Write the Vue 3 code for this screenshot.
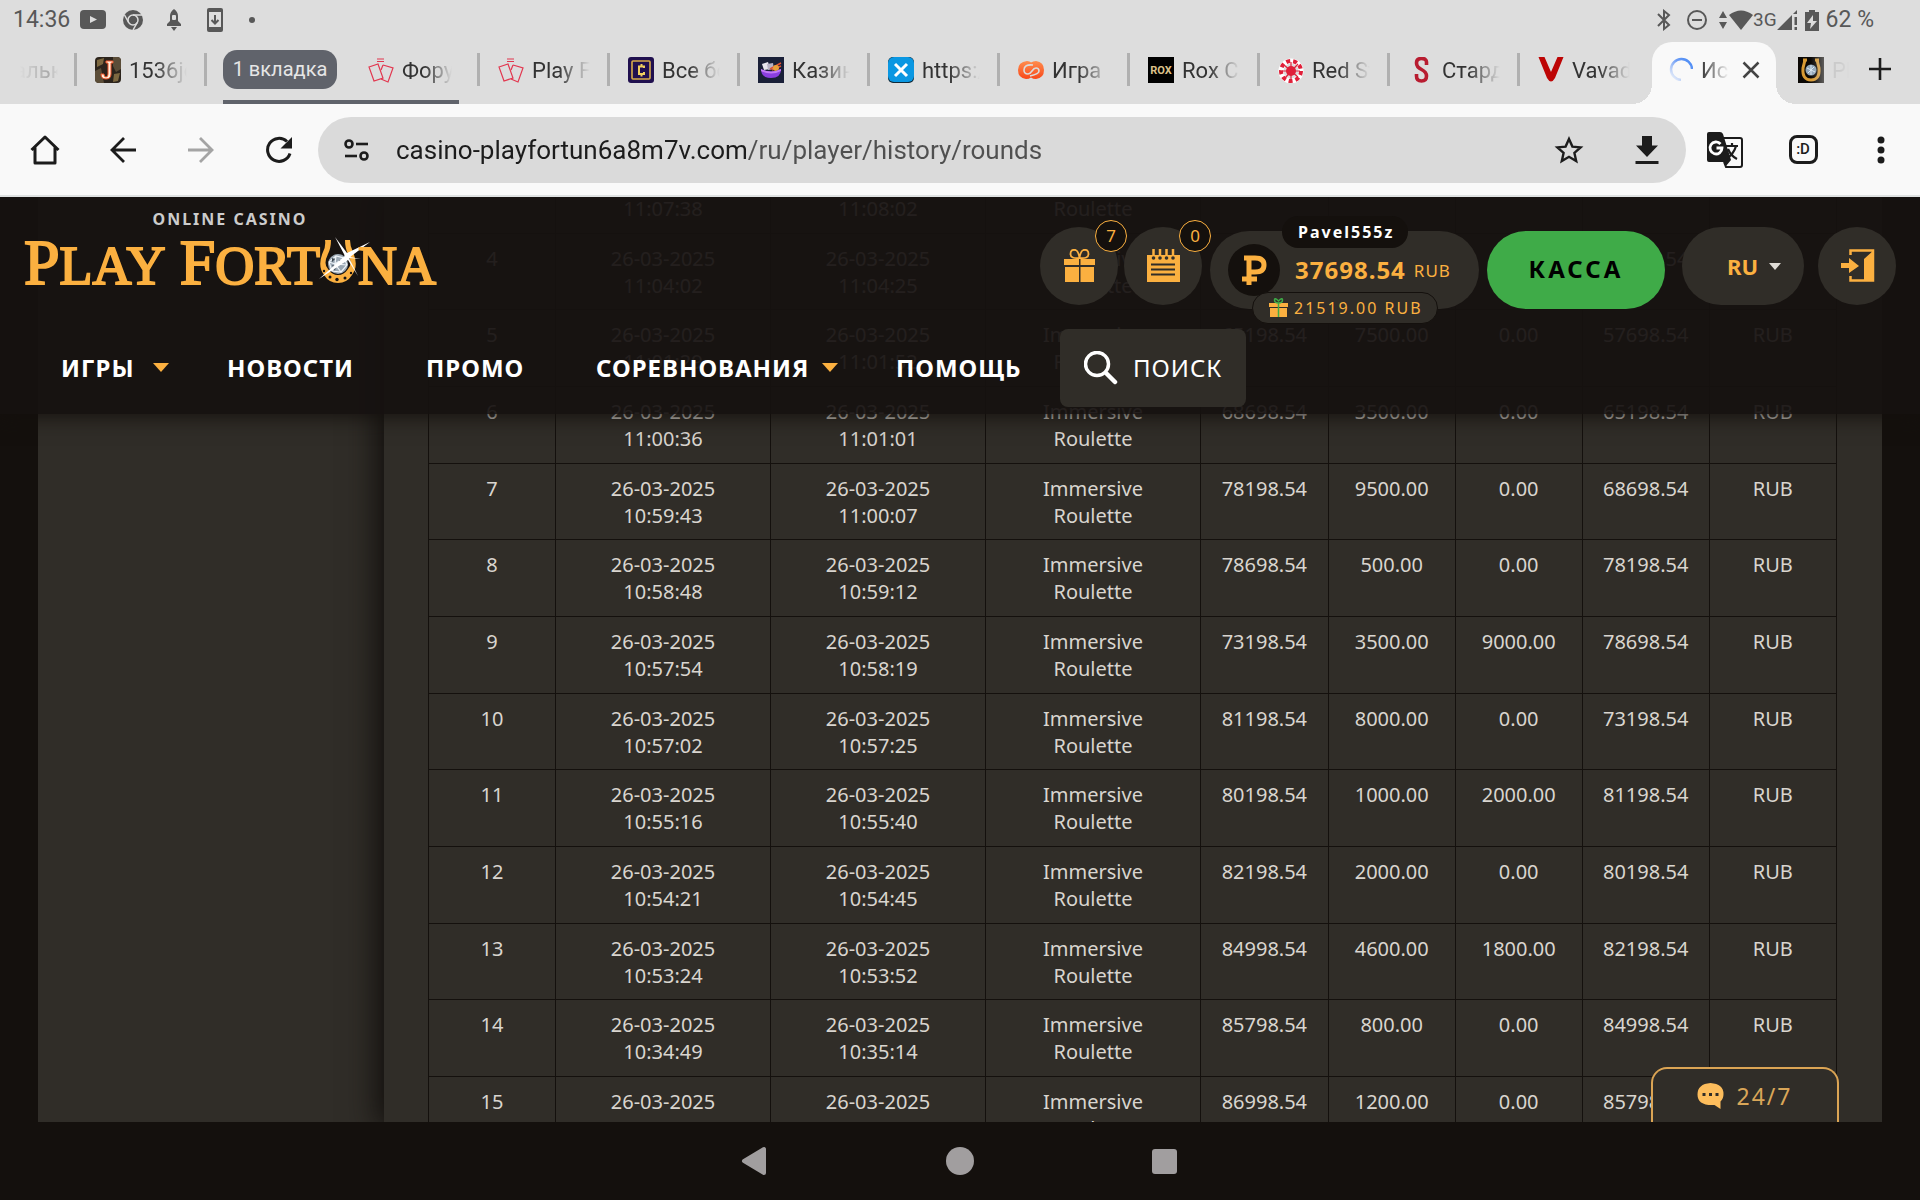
<template>
  <div class="screen">
    <!-- Favicons de las pestañas -->
    <svg class="sprite" aria-hidden="true">
      <symbol id="fav-j" viewBox="0 0 26 26">
        <rect width="26" height="26" rx="4" fill="#2c241c" />
        <path d="M0 14l6-3 3 15H4a4 4 0 0 1-4-4zM18 0h4a4 4 0 0 1 4 4v8l-5 3-3-6z" fill="#5b4d38" />
        <path d="M2 3l7-2-1 6-6 3zM19 17l6-1-2 8-5 1z" fill="#7d6840" />
        <path d="M11 4h7v2h-2v11q0 5-5 5-5 0-5-5h3q0 3 2 3t2-3V6h-2z" fill="#fff0dc" stroke="#f0562a" stroke-width="1" />
      </symbol>
      <symbol id="fav-cards" viewBox="0 0 26 26">
        <g fill="none" stroke="#e2374f" stroke-width="1.2">
          <path d="M1 10l9-3 5 14-9 3z" />
          <path d="M15 8l10 3-5 14-7-3M15 8l-2 5" />
          <path d="M9 2h7M9 4.5h7" />
        </g>
      </symbol>
      <symbol id="fav-coin" viewBox="0 0 26 26">
        <rect width="26" height="26" rx="3" fill="#20104f" />
        <rect x="4" y="4" width="18" height="18" rx="1" fill="none" stroke="#d8ac4a" stroke-width="1.6" />
        <path d="M16 11V9.500h-5v7.500h5v-2M13.500 7v2.500M13.500 17v2.500" fill="none" stroke="#f0d060" stroke-width="2" />
      </symbol>
      <symbol id="fav-bowl" viewBox="0 0 26 26">
        <rect width="26" height="26" fill="#1a2038" />
        <path d="M4 7l6-2 2 7-6 1z" fill="#e8e6ee" />
        <path d="M9 7l6-1 1 6-6 1z" fill="#b7b2c6" />
        <path d="M12 12l11-6M14 13l9-4" stroke="#e4532f" stroke-width="1.5" />
        <circle cx="18" cy="11" r="3" fill="#e9a13a" />
        <path d="M3 12q10 5 20 0 0 9-10 9T3 12z" fill="#8b3fe0" />
        <path d="M3 12q10 5 20 0v2q-10 5-20 0z" fill="#c37bf5" />
      </symbol>
      <symbol id="fav-x" viewBox="0 0 26 26">
        <rect width="26" height="26" rx="5" fill="#0f2a3a" />
        <rect width="26" height="25" rx="6" fill="#0a97e2" />
        <path d="M7 7l12 12M19 7L7 19" stroke="#fff" stroke-width="3" />
      </symbol>
      <symbol id="fav-links" viewBox="0 0 26 26">
        <defs>
          <linearGradient id="orange" x1="0" y1="0" x2="0" y2="1">
            <stop offset="0" stop-color="#ff8d4e" />
            <stop offset="1" stop-color="#f8481a" />
          </linearGradient>
        </defs>
        <path d="M9 4q3 0 4 1.500Q15 4 18 4q8 1 8 9t-8 9q-3 0-5-1.500Q11 22 8 22q-8-1-8-9t9-9z" fill="url(#orange)" />
        <path d="M15 8Q6 7 6 13q0 4 4 4 2 0 4-3t4-3q3 0 3 3 0 3-9 5" fill="none" stroke="#dcdcdc" stroke-width="1.6" />
      </symbol>
      <symbol id="fav-rox" viewBox="0 0 26 26">
        <rect width="26" height="26" fill="#000" />
        <text x="13" y="17" text-anchor="middle" font-family="Roboto, sans-serif" font-size="11" font-weight="700" fill="#dcc08a">ROX</text>
      </symbol>
      <symbol id="fav-virus" viewBox="0 0 26 26">
        <circle cx="13" cy="14" r="10" fill="none" stroke="#fff" stroke-width="5" />
        <circle cx="13" cy="14" r="10" fill="none" stroke="#e0203a" stroke-width="4" stroke-dasharray="4 3" />
        <circle cx="13" cy="14" r="5" fill="#e0203a" />
        <path d="M6 8l14 12M20 7L7 21M13 5v17M4 14h18" stroke="#e0203a" stroke-width="1.2" />
      </symbol>
      <symbol id="fav-s" viewBox="0 0 26 26">
        <path d="M18.500 8V5q0-3.500-5-3.500T8.500 6q0 4 5 6.500t5 6.500q0 5-5 5t-5-5v-2" fill="none" stroke="#b81c30" stroke-width="3.6" />
      </symbol>
      <symbol id="fav-v" viewBox="0 0 26 26">
        <path d="M.5 0h6L13 15 19.500 0h6L17 21q-4 7-8 0z" fill="#bd0505" />
      </symbol>
      <symbol id="fav-shoe" viewBox="0 0 26 26">
        <rect width="26" height="26" fill="#0b0805" />
        <path d="M5 3h4M17 3h4M7 3q-1 4-2 8-1 12 8 12t8-12q-1-4-2-8" fill="none" stroke="#d79a34" stroke-width="3" />
        <circle cx="13" cy="13" r="5.500" fill="#8fa5b8" />
        <path d="M9 11l8 4M10 16l6-6M13 8v10" stroke="#dce8f2" />
      </symbol>
    </svg>

    <!-- Barra de estado -->
    <div class="status-bar">
      <div class="status-left">
        <span class="clock">14:36</span>
        <svg width="26" height="20" viewBox="0 0 26 20"><rect width="26" height="19" rx="4" fill="#585858" /><path d="M10 6l7 3.500-7 3.500z" fill="#ddd" /></svg>
        <svg width="20" height="20" viewBox="0 0 20 20">
          <circle cx="10" cy="10" r="10" fill="#585858" />
          <circle cx="10" cy="10" r="5" fill="none" stroke="#ddd" stroke-width="1.5" />
          <path d="M10 5h9M5.700 12.500L1.500 5M14.300 12.500L10 20" stroke="#ddd" stroke-width="1.5" />
        </svg>
        <svg width="14" height="22" viewBox="0 0 14 22">
          <path d="M7 0q4 3 4 7v5l3 3v2H0v-2l3-3V7q0-4 4-7zM4 18h6l-3 4z" fill="#585858" />
          <rect x="5" y="6" width="4" height="5" rx="1" fill="#ddd" />
        </svg>
        <svg width="16" height="24" viewBox="0 0 16 24">
          <rect width="16" height="24" rx="2" fill="#585858" />
          <rect x="2" y="4" width="12" height="15" fill="#ddd" />
          <path d="M8 7v8M4.500 12L8 15.500 11.500 12" fill="none" stroke="#585858" stroke-width="2" />
        </svg>
        <span class="dot"></span>
      </div>
      <div class="status-right">
        <svg class="bt" width="14" height="22" viewBox="0 0 14 22"><path d="M1 5l11 11-5 4V2l5 4L1 17" fill="none" stroke="#585858" stroke-width="2" /></svg>
        <svg class="dnd" width="20" height="20" viewBox="0 0 20 20"><circle cx="10" cy="10" r="9" fill="none" stroke="#585858" stroke-width="2" /><path d="M5 10h10" stroke="#585858" stroke-width="2" /></svg>
        <svg class="arrows" width="8" height="18" viewBox="0 0 8 18"><path d="M4 0l4 7H0zM4 18l4-7H0z" fill="#585858" /></svg>
        <svg width="24" height="20" viewBox="0 0 24 20"><path d="M0 5Q12-4 24 5L12 20z" fill="#585858" /></svg>
        <span class="net">3G</span>
        <svg width="22" height="20" viewBox="0 0 22 20"><path d="M0 20L15 5v15zM16 4l4-4v4zM17.500 7h2.500v8h-2.500zM17.500 17h2.500v3h-2.500z" fill="#585858" /></svg>
        <svg class="battery" width="14" height="21" viewBox="0 0 14 21"><path d="M4 0h6v2h4v19H0V2h4z" fill="#585858" /><path d="M8 5l-6 8h4l-1 6 7-8H8z" fill="#ddd" /></svg>
        <span class="percent">62 %</span>
      </div>
    </div>

    <!-- Pestañas -->
    <div class="tab-strip">
      <div class="tab-cut">альк</div>
      <div class="tab">
        <svg class="favicon"><use href="#fav-j" /></svg>
        <span class="tab-title">1536jok</span>
      </div>
      <div class="tab-group">
        <button class="group-chip" type="button">1 вкладка</button>
        <div class="tab grouped">
          <svg class="favicon"><use href="#fav-cards" /></svg>
          <span class="tab-title">Форум</span>
        </div>
      </div>
      <div v-for="tab in tabs" :key="tab.icon + tab.title" class="tab">
        <svg class="favicon"><use :href="'#fav-' + tab.icon" /></svg>
        <span class="tab-title">{{ tab.title }}</span>
      </div>
      <div class="tab-active">
        <svg width="24" height="24" viewBox="0 0 24 24">
          <defs>
            <linearGradient id="spin" x1="1" y1="0" x2="0" y2="1">
              <stop offset="0" stop-color="#4287f5" />
              <stop offset="0.4" stop-color="#6f9ef5" />
              <stop offset="1" stop-color="#f9f9f9" />
            </linearGradient>
          </defs>
          <path d="M23 12A10.500 10.500 0 1 0 12 23" fill="none" stroke="url(#spin)" stroke-width="2.5" />
        </svg>
        <span class="tab-title">Ист</span>
        <button class="icon-btn close" type="button" aria-label="Закрыть">
          <svg width="18" height="18" viewBox="0 0 18 18"><path d="M1.500 1.500l15 15M16.500 1.500l-15 15" stroke="#444" stroke-width="2.5" /></svg>
        </button>
      </div>
      <div class="tab last">
        <svg class="favicon"><use href="#fav-shoe" /></svg>
        <span class="tab-title">Pla</span>
      </div>
      <button class="icon-btn new-tab" type="button" aria-label="Новая вкладка">
        <svg width="22" height="22" viewBox="0 0 22 22"><path d="M11 0v22M0 11h22" stroke="#1c1c1c" stroke-width="2.6" /></svg>
      </button>
    </div>

    <!-- Barra de direcciones -->
    <div class="toolbar">
      <button class="icon-btn tool" type="button" aria-label="Главная">
        <svg width="30" height="30" viewBox="0 0 30 30"><path d="M1.500 15L15 2l13.500 13M5 12.500V28h20V12.500" fill="none" stroke="#1c1c1c" stroke-width="3" stroke-linejoin="round" /></svg>
      </button>
      <button class="icon-btn tool" type="button" aria-label="Назад">
        <svg width="26" height="26" viewBox="0 0 26 26"><path d="M26 13H2M14 1L2 13l12 12" fill="none" stroke="#1c1c1c" stroke-width="2.8" /></svg>
      </button>
      <button class="icon-btn tool" type="button" aria-label="Вперёд" disabled>
        <svg width="26" height="26" viewBox="0 0 26 26"><path d="M0 13h24M12 1l12 12-12 12" fill="none" stroke="#a4a4a4" stroke-width="2.8" /></svg>
      </button>
      <button class="icon-btn tool" type="button" aria-label="Обновить">
        <svg width="28" height="28" viewBox="0 0 28 28"><path d="M22 5.500A11.500 11.500 0 1 0 25 17.500" fill="none" stroke="#1c1c1c" stroke-width="3" /><path d="M27 1v11.500H15.500z" fill="#1c1c1c" /></svg>
      </button>
      <div class="omnibox">
        <svg width="26" height="22" viewBox="0 0 26 22">
          <g fill="none" stroke="#1c1c1c" stroke-width="2.6">
            <circle cx="5" cy="5" r="3.500" /><path d="M12 5h12" /><circle cx="20" cy="17" r="3.500" /><path d="M1 17h12" />
          </g>
        </svg>
        <input class="url" type="text" aria-label="Адрес" value="casino-playfortun6a8m7v.com/ru/player/history/rounds" />
        <button class="icon-btn tool" type="button" aria-label="В закладки">
          <svg width="30" height="30" viewBox="0 0 30 30"><path d="M15 4l3.400 7.600 8.200.8-6.200 5.500 1.800 8.100L15 21.800 7.800 26l1.800-8.100-6.200-5.500 8.200-.8z" fill="none" stroke="#1c1c1c" stroke-width="2.4" /></svg>
        </button>
        <button class="icon-btn tool" type="button" aria-label="Скачать">
          <svg width="24" height="28" viewBox="0 0 24 28"><path d="M7 0h10v9.500h6L12 21 1 9.500h6zM.5 25h23v3H.5z" fill="#1c1c1c" /></svg>
        </button>
      </div>
      <button class="icon-btn tool" type="button" aria-label="Перевести">
        <svg width="36" height="36" viewBox="0 0 36 36">
          <path d="M2 0h11q2 0 3 2l8 26-5 6-2-4H2a2 2 0 0 1-2-2V2a2 2 0 0 1 2-2z" fill="#1c1c1c" />
          <path d="M16 6h17q2 0 2 2v25q0 2-2 2H19l-2-5" fill="none" stroke="#1c1c1c" stroke-width="2" />
          <path d="M19 14h12M25 11v3M29 14q-2 8-10 13M21 17q3 7 9 10" fill="none" stroke="#1c1c1c" stroke-width="2.2" />
          <path d="M13.500 12A6 6 0 1 0 15 16H9.500" fill="none" stroke="#fff" stroke-width="2.8" />
        </svg>
      </button>
      <button class="icon-btn tool" type="button" aria-label="Вкладки">
        <span class="tab-count">:D</span>
      </button>
      <button class="icon-btn tool" type="button" aria-label="Меню">
        <svg width="8" height="28" viewBox="0 0 8 28"><g fill="#1c1c1c"><circle cx="4" cy="4" r="3.500" /><circle cx="4" cy="14" r="3.500" /><circle cx="4" cy="24" r="3.500" /></g></svg>
      </button>
    </div>

    <!-- Página del casino -->
    <div class="page">
      <header class="site-header">
        <div class="header-top">
          <a class="brand" href="#">
            <span class="brand-top">ONLINE CASINO</span>
            <span class="brand-name">
              <span><b>P</b>LAY</span>
              <span><b>F</b>ORT</span><svg class="horseshoe" width="36" height="44" viewBox="0 0 36 44" aria-label="U">
                <path d="M5 0h6q0 8-3 14-5 10 0 15 4 6 10 6t10-6q5-5 0-15-3-6-3-14h5q0 6 3 12 6 14-1 23-5 8-14 8t-14-8q-7-9-1-23 3-6 2-12z" fill="#fbb040" />
                <g fill="#171312"><circle cx="4" cy="31" r="1.200" /><circle cx="10" cy="37" r="1.500" /><circle cx="17" cy="39.500" r="1.700" /><circle cx="25" cy="38" r="1.500" /><circle cx="31" cy="33" r="1.200" /></g>
                <circle cx="18" cy="24" r="10" fill="#9aa7b3" />
                <path d="M9 22l7-6 8 2 3 7-6 7-9-1zM16 16l-1 8 6 8M9 22l6 2 12 1M24 18l-9 6-3 7" fill="none" stroke="#eef3f7" stroke-width="1.2" />
                <path d="M12 25l4 1-1 5zM19 20l5 1-2 3zM12 18l3 1-3 3z" fill="#3d4852" />
                <path d="M15-3l12 16L50 2 30 17l11 2-12-1 9 18-10-16L-1 39l26-23z" fill="#fff" />
                <circle cx="27.500" cy="16" r="3" fill="#fff" />
              </svg><span>NA</span>
            </span>
          </a>

          <div class="user-panel">
            <a class="round-btn" href="#" aria-label="Бонусы">
              <svg width="32" height="34" viewBox="0 0 32 34">
                <path d="M15.500 9q-9 1-9-4t5-4q3 1 4 8 1-7 4-8 5-1 5 4t-9 4" fill="none" stroke="#fbb040" stroke-width="1.8" />
                <path d="M0 10h15v6H0zM16.500 10H31v6H16.500zM1 18h14v15H1zM16.500 18H30v15H16.500z" fill="#fbb040" />
              </svg>
              <span class="badge">7</span>
            </a>
            <a class="round-btn" href="#" aria-label="Задания">
              <svg width="34" height="34" viewBox="0 0 34 34">
                <path d="M0 6h33v27H0z" fill="#fbb040" />
                <path d="M6.500 0v8M13 0v8M19.500 0v8M26 0v8" stroke="#fbb040" stroke-width="2.5" />
                <g fill="#302d28"><circle cx="6.500" cy="9" r="1.800" /><circle cx="13" cy="9" r="1.800" /><circle cx="19.500" cy="9" r="1.800" /><circle cx="26" cy="9" r="1.800" /></g>
                <path d="M4 15.500h24M4 20.500h24M4 25.500h24" stroke="#302d28" stroke-width="1.8" />
              </svg>
              <span class="badge">0</span>
            </a>
            <div class="wallet">
              <span class="coin">
                <svg width="28" height="30" viewBox="0 0 28 30"><path d="M9 30V3M4 3h11q9 0 9 7t-9 7H9M2 24h15" fill="none" stroke="#fbb040" stroke-width="5" /></svg>
              </span>
              <span class="amount">37698.54</span>
              <span class="currency">RUB</span>
              <span class="user-name">Pavel555z</span>
              <span class="bonus">
                <svg width="20" height="20" viewBox="0 0 20 20">
                  <path d="M0 5h19v4H0zM1 10h17v9H1z" fill="#fbb040" />
                  <path d="M9.500 5q-4 0-4-3t4 1q4-4 4-1t-4 3v14" fill="none" stroke="#3fab48" stroke-width="1.5" />
                </svg>
                21519.00 RUB
              </span>
            </div>
            <button class="cashier" type="button">КАССА</button>
            <div class="lang">
              <select aria-label="Язык"><option>RU</option></select>
              <svg width="12" height="7" viewBox="0 0 12 7"><path d="M0 0h12L6 7z" fill="#e0dcd6" /></svg>
            </div>
            <a class="round-btn" href="#" aria-label="Выход">
              <svg width="34" height="34" viewBox="0 0 34 34">
                <path d="M9.500 6V1.500H32v30H9.500V27" fill="none" stroke="#fbb040" stroke-width="2.5" />
                <path d="M23 10l10-9v31H23zM0 14h8V9l10 8-10 7v-5H0z" fill="#fbb040" />
              </svg>
            </a>
          </div>
        </div>

        <nav class="main-nav">
          <a href="#" class="games">ИГРЫ<i class="caret"></i></a>
          <a href="#" class="news">НОВОСТИ</a>
          <a href="#" class="promo">ПРОМО</a>
          <a href="#" class="contests">СОРЕВНОВАНИЯ<i class="caret"></i></a>
          <a href="#" class="help">ПОМОЩЬ</a>
          <button class="search" type="button">
            <svg width="34" height="34" viewBox="0 0 34 34"><circle cx="13" cy="13" r="11.500" fill="none" stroke="#fff" stroke-width="3.5" /><path d="M23 23l8 8" stroke="#fff" stroke-width="4.5" stroke-linecap="round" /></svg>
            ПОИСК
          </button>
        </nav>
      </header>

      <div class="layout">
        <aside class="sidebar"></aside>
        <main class="content">
          <table class="rounds">
            <colgroup>
              <col v-for="(w, i) in widths" :key="i" :style="{ width: w + '%' }" />
            </colgroup>
            <tbody>
              <tr v-for="r in rounds" :key="r.n">
                <td>{{ r.n }}</td>
                <td>26-03-2025<br />{{ r.start }}</td>
                <td>26-03-2025<br />{{ r.end }}</td>
                <td>Immersive<br />Roulette</td>
                <td>{{ r.before }}</td>
                <td>{{ r.bet }}</td>
                <td>{{ r.win }}</td>
                <td>{{ r.after }}</td>
                <td>RUB</td>
              </tr>
            </tbody>
          </table>
        </main>
      </div>

      <button class="chat" type="button">
        <svg width="28" height="28" viewBox="0 0 28 28">
          <path d="M13.500 1q13 1 13 11 0 5-3 7.500V27l-6-4Q.5 24 .5 12.500.5 2 13.500 1z" fill="#fdbd5c" />
          <path d="M5.500 11h3v3h-3zM12 11h3v3h-3zM18.500 11h3v3h-3z" fill="#302d28" />
        </svg>
        24/7
      </button>
    </div>

    <!-- Navegación de Android -->
    <div class="system-nav">
      <button class="icon-btn" type="button" aria-label="Назад">
        <svg width="28" height="32" viewBox="0 0 28 32"><path d="M24 4v24L4 16z" fill="#a19e9f" stroke="#a19e9f" stroke-width="4" stroke-linejoin="round" /></svg>
      </button>
      <button class="icon-btn" type="button" aria-label="Домой">
        <svg width="28" height="28" viewBox="0 0 28 28"><circle cx="14" cy="14" r="14" fill="#a19e9f" /></svg>
      </button>
      <button class="icon-btn" type="button" aria-label="Обзор">
        <svg width="25" height="25" viewBox="0 0 25 25"><rect width="25" height="25" rx="3" fill="#a19e9f" /></svg>
      </button>
    </div>
  </div>
</template>

<script setup>
const tabs = [
  { icon: 'cards', title: 'Play Fo' },
  { icon: 'coin', title: 'Все бо' },
  { icon: 'bowl', title: 'Казино' },
  { icon: 'x', title: 'https:/' },
  { icon: 'links', title: 'Игра' },
  { icon: 'rox', title: 'Rox Ca' },
  { icon: 'virus', title: 'Red St' },
  { icon: 's', title: 'Стард' },
  { icon: 'v', title: 'Vavada' }
];

// Ancho de cada columna en porcentaje
const widths = [9.02, 15.27, 15.27, 15.27, 9.07, 9.02, 9.02, 9.02, 9.04];

const rounds = [
  { n: 3, start: '11:07:38', end: '11:08:02', before: '49698.54', bet: '5000.00', win: '0.00', after: '44698.54' },
  { n: 4, start: '11:04:02', end: '11:04:25', before: '57698.54', bet: '8000.00', win: '0.00', after: '49698.54' },
  { n: 5, start: '11:01:29', end: '11:01:52', before: '65198.54', bet: '7500.00', win: '0.00', after: '57698.54' },
  { n: 6, start: '11:00:36', end: '11:01:01', before: '68698.54', bet: '3500.00', win: '0.00', after: '65198.54' },
  { n: 7, start: '10:59:43', end: '11:00:07', before: '78198.54', bet: '9500.00', win: '0.00', after: '68698.54' },
  { n: 8, start: '10:58:48', end: '10:59:12', before: '78698.54', bet: '500.00', win: '0.00', after: '78198.54' },
  { n: 9, start: '10:57:54', end: '10:58:19', before: '73198.54', bet: '3500.00', win: '9000.00', after: '78698.54' },
  { n: 10, start: '10:57:02', end: '10:57:25', before: '81198.54', bet: '8000.00', win: '0.00', after: '73198.54' },
  { n: 11, start: '10:55:16', end: '10:55:40', before: '80198.54', bet: '1000.00', win: '2000.00', after: '81198.54' },
  { n: 12, start: '10:54:21', end: '10:54:45', before: '82198.54', bet: '2000.00', win: '0.00', after: '80198.54' },
  { n: 13, start: '10:53:24', end: '10:53:52', before: '84998.54', bet: '4600.00', win: '1800.00', after: '82198.54' },
  { n: 14, start: '10:34:49', end: '10:35:14', before: '85798.54', bet: '800.00', win: '0.00', after: '84998.54' },
  { n: 15, start: '10:33:55', end: '10:34:20', before: '86998.54', bet: '1200.00', win: '0.00', after: '85798.54' }
];
</script>

<style>
html,
body {
  margin: 0;
  background: #14100d;
}
</style>

<style scoped>
.screen {
  display: flex;
  flex-direction: column;
  height: 100vh;
  overflow: hidden;
  font-family: "Noto Sans", sans-serif;
}

.screen * {
  box-sizing: border-box;
}

.screen svg {
  display: block;
  flex: none;
}

.screen .sprite {
  position: absolute;
  width: 0;
  height: 0;
}

.icon-btn {
  display: flex;
  align-items: center;
  justify-content: center;
  padding: 0;
  border: 0;
  background: none;
}

a {
  color: inherit;
  text-decoration: none;
}

/* Barra de estado */
.status-bar {
  display: flex;
  flex: none;
  justify-content: space-between;
  height: 40px;
  padding: 0 46px 0 13px;
  background: #ddd;
  color: #585858;
  font: 23px/40px Roboto, sans-serif;
}

.status-left,
.status-right {
  display: flex;
  align-items: center;
}

.clock {
  margin-right: 10px;
}

.status-left svg {
  margin-right: 17px;
}

.status-left svg + svg {
  margin-right: 24px;
}

.status-left svg + svg + svg {
  margin-right: 26px;
}

.dot {
  width: 6px;
  height: 6px;
  border-radius: 50%;
  background: #585858;
}

.bt {
  margin-right: 16px;
}

.dnd {
  margin-right: 12px;
}

.arrows {
  margin-right: 2px;
}

.net {
  font-size: 19px;
}

.battery {
  margin: 0 7px 0 6px;
}

/* Pestañas */
.tab-strip {
  display: flex;
  flex: none;
  height: 64px;
  background: #ddd;
  color: #333;
  font: 22px/30px Roboto, sans-serif;
}

.tab-cut {
  width: 74px;
  padding: 16px 0 0 14px;
  color: #aaa;
  overflow: hidden;
  mask-image: linear-gradient(to right, transparent 20px, #000 48px, transparent 58px);
}

.tab {
  display: flex;
  flex: 0 1 130px;
  align-items: flex-start;
  min-width: 0;
  padding: 17px 16px 0 0;
  overflow: hidden;
}

.tab::before {
  content: "";
  flex: none;
  width: 3px;
  height: 33px;
  margin: -4px 18px 0 0;
  background: #b0b0b0;
}

.favicon {
  width: 26px;
  height: 26px;
}

.tab-title {
  flex: 1;
  min-width: 0;
  margin: -1px 0 0 8px;
  overflow: hidden;
  white-space: nowrap;
  mask-image: linear-gradient(to right, #000 45%, transparent 98%);
}

.tab-group {
  display: flex;
  flex: none;
  width: 273px;
  padding-left: 3px;
  background: linear-gradient(#60636b, #60636b) 19px 60px / 236px 4px no-repeat;
}

.tab-group::before {
  content: "";
  width: 3px;
  height: 33px;
  margin: 13px 13px 0 -3px;
  background: #b0b0b0;
}

.group-chip {
  width: 114px;
  height: 39px;
  margin: 10px 0 0 3px;
  padding: 0;
  border: 0;
  border-radius: 14px;
  background: #60636b;
  color: #e6e6e6;
  font: 20px/39px Roboto, sans-serif;
}

.tab.grouped {
  padding-right: 14px;
}

.tab.grouped::before {
  width: 0;
  margin-right: 31px;
}

.tab-active {
  position: relative;
  display: flex;
  align-items: flex-start;
  width: 124px;
  margin: 2px 0 0 5px;
  padding: 15px 16px 0 17px;
  border-radius: 20px 20px 0 0;
  background: #f9f9f9;
}

.tab-active::before,
.tab-active::after {
  content: "";
  position: absolute;
  bottom: 0;
  width: 20px;
  height: 20px;
}

.tab-active::before {
  right: 100%;
  background: radial-gradient(circle at 0 0, transparent 20px, #f9f9f9 20px);
}

.tab-active::after {
  left: 100%;
  background: radial-gradient(circle at 100% 0, transparent 20px, #f9f9f9 20px);
}

.tab-active .tab-title {
  mask-image: linear-gradient(to right, #000, transparent 28px);
}

.close {
  width: 18px;
  height: 26px;
}

.tab.last {
  flex-basis: 74px;
  padding-right: 0;
}

.tab.last::before {
  width: 0;
  margin-right: 22px;
}

.tab.last .favicon {
  mask-image: linear-gradient(to right, #000 50%, rgba(0, 0, 0, 0.6));
}

.tab.last .tab-title {
  opacity: 0.1;
}

.new-tab {
  margin: 18px 29px 0 auto;
  height: 22px;
}

/* Barra de direcciones */
.toolbar {
  display: flex;
  flex: none;
  align-items: center;
  height: 93px;
  padding-left: 6px;
  border-bottom: 2px solid #dfe2e2;
  background: #f9f9f9;
}

.tool {
  flex: none;
  width: 78px;
  height: 66px;
}

.omnibox {
  display: flex;
  flex: 1;
  align-items: center;
  height: 66px;
  padding-left: 26px;
  border-radius: 33px;
  background: #dadada;
}

.url {
  flex: 1;
  min-width: 0;
  margin-left: 26px;
  padding: 0;
  border: 0;
  outline: 0;
  background: linear-gradient(to right, #1c1c1c 350px, #505050 350px);
  background-clip: text;
  color: transparent;
  font: 26px/40px Roboto, sans-serif;
}

.tab-count {
  width: 29px;
  height: 29px;
  border: 3px solid #1c1c1c;
  border-radius: 8px;
  color: #1c1c1c;
  font: 500 15px/22px Roboto, sans-serif;
}

/* Página */
.page {
  position: relative;
  flex: 1;
  min-height: 0;
  overflow: hidden;
  background: #14100d;
}

.site-header {
  position: absolute;
  top: 0;
  left: 0;
  right: 0;
  z-index: 2;
  height: 217px;
  background: rgba(21, 17, 16, 0.93);
  box-shadow: 0 0 20px 2px #14100d;
  color: #fff;
}

.header-top {
  display: flex;
  justify-content: space-between;
  height: 132px;
  padding: 0 24px;
}

.brand {
  display: flex;
  flex-direction: column;
  align-items: center;
  padding-top: 11px;
}

.brand-top {
  color: #ccc;
  font-size: 16px;
  font-weight: 700;
  letter-spacing: 2px;
  line-height: 22px;
}

.brand-name {
  display: flex;
  align-items: baseline;
  color: #fbb040;
  font: 54px/66px "Liberation Serif", serif;
  -webkit-text-stroke: 2px #fbb040;
}

.brand-name b {
  font-size: 64px;
  font-weight: 400;
}

.brand-name span + span {
  margin-left: 14px;
}

.brand-name svg + span {
  margin-left: 2px;
}

.horseshoe {
  overflow: visible;
}

.user-panel {
  display: flex;
  align-items: flex-start;
  padding-top: 30px;
}

.round-btn {
  position: relative;
  display: flex;
  align-items: center;
  justify-content: center;
  width: 78px;
  height: 78px;
  margin-right: 6px;
  padding-left: 2px;
  border-radius: 50%;
  background: #302d28;
}

.round-btn:last-child {
  margin-right: 0;
}

.badge {
  position: absolute;
  top: -7px;
  right: -9px;
  width: 32px;
  height: 32px;
  border: 1px solid #fbb040;
  border-radius: 50%;
  background: #14100d;
  color: #fbb040;
  font-size: 17px;
  line-height: 30px;
  text-align: center;
}

.wallet {
  position: relative;
  display: flex;
  align-items: center;
  width: 269px;
  height: 78px;
  margin: 4px 8px 0 2px;
  padding-left: 18px;
  border-radius: 39px;
  background: #302d28;
  color: #fbb040;
}

.coin {
  display: flex;
  align-items: center;
  justify-content: center;
  width: 52px;
  height: 52px;
  border-radius: 50%;
  background: #14100d;
}

.amount {
  margin-left: 15px;
  padding-bottom: 2px;
  font-size: 24px;
  font-weight: 700;
  letter-spacing: 1px;
}

.currency {
  margin-left: 8px;
  font-size: 17px;
  letter-spacing: 1px;
}

.user-name {
  position: absolute;
  top: -15px;
  left: 72px;
  padding: 0 14px 0 16px;
  border-radius: 16px;
  background: #14100d;
  color: #fff;
  font-size: 16px;
  font-weight: 700;
  letter-spacing: 2px;
  line-height: 32px;
}

.bonus {
  position: absolute;
  top: 61px;
  left: 42px;
  display: flex;
  align-items: center;
  gap: 5px;
  padding: 0 14px 0 16px;
  border: 1px solid #14100d;
  border-radius: 16px;
  background: #302d28;
  font-size: 16px;
  letter-spacing: 2px;
  line-height: 30px;
  white-space: nowrap;
}

.cashier {
  width: 178px;
  height: 78px;
  margin: 4px 17px 0 0;
  padding: 0 0 2px;
  border: 0;
  border-radius: 39px;
  background: #3fab48;
  color: #000;
  font: 700 24px/76px "Noto Sans", sans-serif;
  letter-spacing: 3px;
}

.lang {
  display: flex;
  align-items: center;
  justify-content: center;
  gap: 10px;
  width: 122px;
  height: 78px;
  margin-right: 14px;
  padding-left: 22px;
  border-radius: 39px;
  background: #302d28;
}

.lang select {
  appearance: none;
  padding: 0;
  border: 0;
  background: none;
  color: #fbb040;
  font: 700 22px/32px "Noto Sans", sans-serif;
}

.main-nav {
  display: flex;
  align-items: center;
  height: 78px;
  padding-left: 61px;
  font-size: 24px;
  font-weight: 700;
  letter-spacing: 1px;
}

.main-nav a {
  display: flex;
  flex: none;
  align-items: center;
  padding-bottom: 2px;
}

.caret {
  border: solid transparent;
  border-width: 9px 8px 0;
  border-top-color: #fbb040;
}

.games {
  width: 166px;
  gap: 18px;
}

.news {
  width: 199px;
}

.promo {
  width: 170px;
}

.contests {
  width: 300px;
  gap: 13px;
}

.help {
  width: 164px;
}

.search {
  display: flex;
  flex: none;
  align-items: center;
  gap: 15px;
  height: 78px;
  padding: 0 24px;
  border: 0;
  border-radius: 8px;
  background: #302d28;
  color: #fff;
  font: 24px/32px "Noto Sans", sans-serif;
  letter-spacing: 1px;
}

.layout {
  display: flex;
  height: 100%;
  margin: 0 38px;
  overflow: hidden;
}

.sidebar {
  flex: none;
  width: 346px;
  background: #302d28;
}

.content {
  flex: 1;
  padding: 0 45px 0 44px;
  background: #302d28;
  box-shadow: 0 0 30px 6px #100d0b;
}

.rounds {
  width: 100%;
  margin-top: -41px;
  border-collapse: collapse;
  table-layout: fixed;
  color: #d9d5cf;
  font-size: 20px;
  line-height: 27px;
  text-align: center;
}

.rounds td {
  height: 77px;
  padding: 11px 0 0;
  border: 1px solid #14100d;
  vertical-align: top;
}

.rounds tr:nth-child(3n + 2) td {
  height: 76px;
}

.chat {
  position: absolute;
  right: 81px;
  bottom: 0;
  z-index: 1;
  display: flex;
  align-items: center;
  justify-content: center;
  gap: 11px;
  width: 188px;
  height: 55px;
  border: 2px solid #dba454;
  border-bottom: 0;
  border-radius: 16px 16px 0 0;
  background: #302d28;
  color: #d9a658;
  font: 23px/32px "Noto Sans", sans-serif;
  letter-spacing: 2px;
}

/* Navegación de Android */
.system-nav {
  display: flex;
  flex: none;
  align-items: center;
  justify-content: center;
  gap: 178px;
  height: 78px;
  padding-right: 4px;
  background: #14100d;
}
</style>
